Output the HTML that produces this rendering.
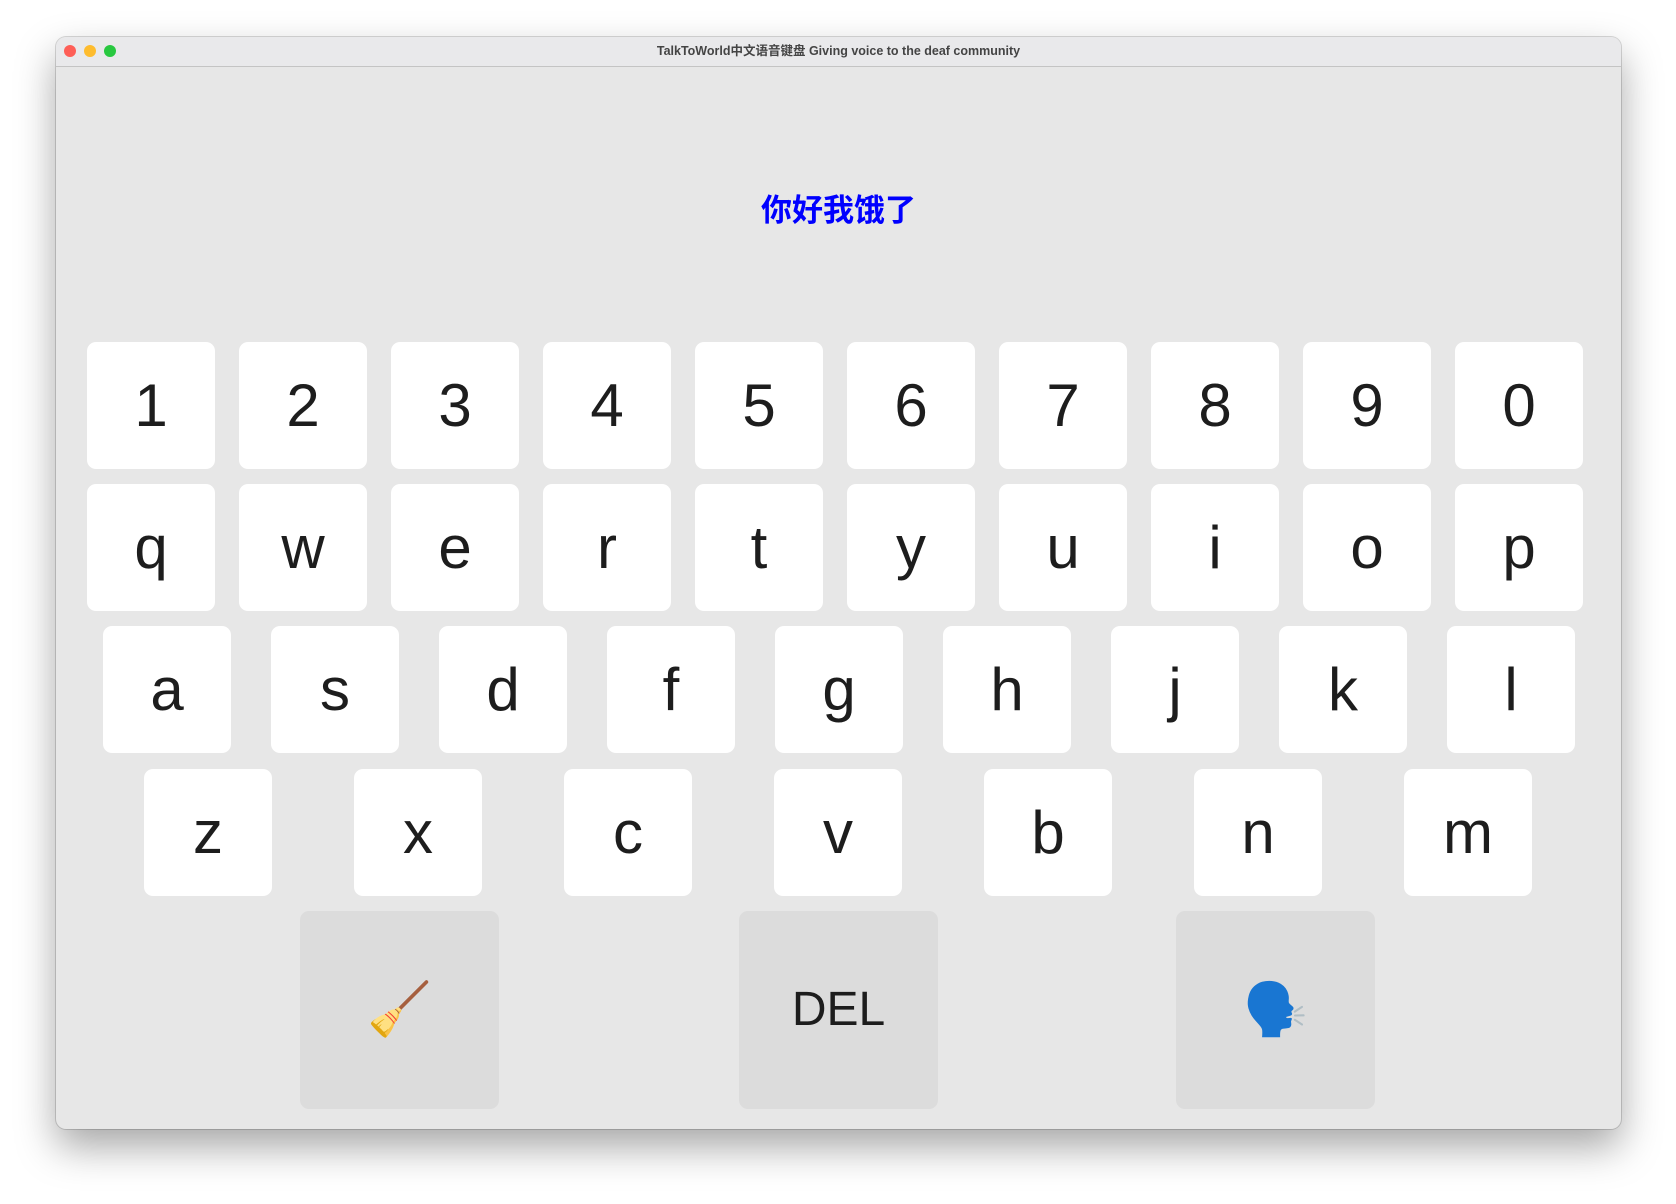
<!DOCTYPE html>
<html><head><meta charset="utf-8"><style>
body{margin:0;width:1676px;height:1204px;background:#fff;position:relative;overflow:hidden;font-family:"Liberation Sans","Noto Sans CJK SC",sans-serif}
.win{position:absolute;left:56px;top:37px;width:1565px;height:1092px;background:#e7e7e7;border-radius:10px;overflow:hidden;box-shadow:0 18px 40px rgba(0,0,0,.35),0 0 0 1px rgba(0,0,0,.15)}
.tb{position:absolute;left:0;top:0;right:0;height:29px;background:#e9e9eb;border-bottom:1px solid #c4c4c4;text-align:center;font-size:12.5px;font-weight:bold;color:#444;line-height:29px}
.d{position:absolute;top:8px;width:12px;height:12px;border-radius:50%}
.out{position:absolute;left:0;right:0;top:148px;text-align:center;color:#0000ff;font-size:31px;font-weight:bold}
.k{position:absolute;width:128px;height:127px;background:#fff;border-radius:9px;text-align:center;line-height:128px;font-size:60px;color:#1d1d1d}
.b{position:absolute;top:874px;width:199px;height:198px;background:#dcdcdc;border-radius:9px;text-align:center;line-height:198px;font-size:48px;color:#1d1d1d}
</style></head><body>
<div class="win">
<div class="tb">TalkToWorld中文语音键盘 Giving voice to the deaf community
<div class="d" style="left:8px;background:#fe5f57"></div><div class="d" style="left:28px;background:#febc2e"></div><div class="d" style="left:48px;background:#28c840"></div></div>
<div class="out">你好我饿了</div>
<div id="keys"></div>
<div class="b" style="left:244px;font-size:52px">🧹</div>
<div class="b" style="left:683px">DEL</div>
<div class="b" style="left:1120px;font-size:52px">🗣️</div>
</div>
<script>
var rows=[["1234567890",31,305,152],["qwertyuiop",31,447,152],["asdfghjkl",47,589,168],["zxcvbnm",88,732,210]];
var h="";rows.forEach(function(r){for(var i=0;i<r[0].length;i++){h+='<div class="k" style="left:'+(r[1]+i*r[3])+'px;top:'+r[2]+'px">'+r[0][i]+'</div>';}});
document.getElementById("keys").innerHTML=h;
</script>
</body></html>
